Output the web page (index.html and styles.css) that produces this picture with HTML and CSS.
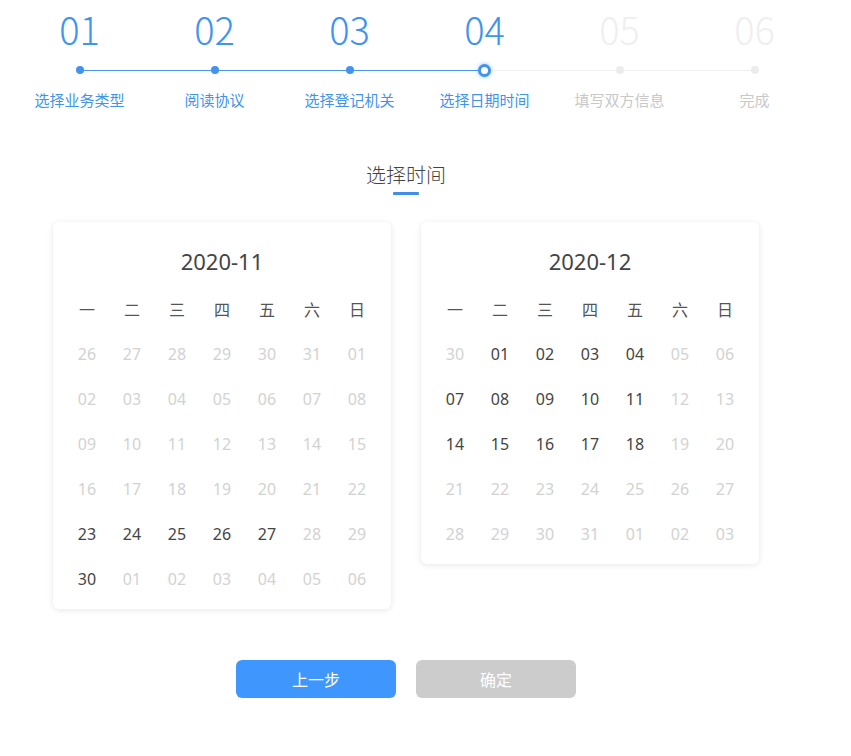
FILE: index.html
```html
<!DOCTYPE html>
<html lang="zh-CN">
<head>
<meta charset="utf-8">
<title>选择日期时间</title>
<link rel="stylesheet" href="styles.css">
</head>
<body>
<div class="page">
  <div class="steps">
    <div class="step done first">
      <div class="step-num">01</div>
      <div class="step-track"><span class="line-l"></span><span class="dot"></span><span class="line-r on"></span></div>
      <div class="step-label">选择业务类型</div>
    </div>
    <div class="step done">
      <div class="step-num">02</div>
      <div class="step-track"><span class="line-l on"></span><span class="dot"></span><span class="line-r on"></span></div>
      <div class="step-label">阅读协议</div>
    </div>
    <div class="step done">
      <div class="step-num">03</div>
      <div class="step-track"><span class="line-l on"></span><span class="dot"></span><span class="line-r on"></span></div>
      <div class="step-label">选择登记机关</div>
    </div>
    <div class="step done current">
      <div class="step-num">04</div>
      <div class="step-track"><span class="line-l on"></span><span class="dot ring"></span><span class="line-r"></span></div>
      <div class="step-label">选择日期时间</div>
    </div>
    <div class="step todo">
      <div class="step-num">05</div>
      <div class="step-track"><span class="line-l"></span><span class="dot"></span><span class="line-r"></span></div>
      <div class="step-label">填写双方信息</div>
    </div>
    <div class="step todo last">
      <div class="step-num">06</div>
      <div class="step-track"><span class="line-l"></span><span class="dot"></span><span class="line-r"></span></div>
      <div class="step-label">完成</div>
    </div>
  </div>

  <div class="section-title">
    <h2>选择时间</h2>
    <span class="bar"></span>
  </div>

  <div class="calendars">
    <div class="cal">
      <div class="cal-title">2020-11</div>
      <div class="cal-grid">
        <span class="wk">一</span><span class="wk">二</span><span class="wk">三</span><span class="wk">四</span><span class="wk">五</span><span class="wk">六</span><span class="wk">日</span>
        <span class="off">26</span><span class="off">27</span><span class="off">28</span><span class="off">29</span><span class="off">30</span><span class="off">31</span><span class="off">01</span>
        <span class="off">02</span><span class="off">03</span><span class="off">04</span><span class="off">05</span><span class="off">06</span><span class="off">07</span><span class="off">08</span>
        <span class="off">09</span><span class="off">10</span><span class="off">11</span><span class="off">12</span><span class="off">13</span><span class="off">14</span><span class="off">15</span>
        <span class="off">16</span><span class="off">17</span><span class="off">18</span><span class="off">19</span><span class="off">20</span><span class="off">21</span><span class="off">22</span>
        <span class="on">23</span><span class="on">24</span><span class="on">25</span><span class="on">26</span><span class="on">27</span><span class="off">28</span><span class="off">29</span>
        <span class="on">30</span><span class="off">01</span><span class="off">02</span><span class="off">03</span><span class="off">04</span><span class="off">05</span><span class="off">06</span>
      </div>
    </div>
    <div class="cal">
      <div class="cal-title">2020-12</div>
      <div class="cal-grid">
        <span class="wk">一</span><span class="wk">二</span><span class="wk">三</span><span class="wk">四</span><span class="wk">五</span><span class="wk">六</span><span class="wk">日</span>
        <span class="off">30</span><span class="on">01</span><span class="on">02</span><span class="on">03</span><span class="on">04</span><span class="off">05</span><span class="off">06</span>
        <span class="on">07</span><span class="on">08</span><span class="on">09</span><span class="on">10</span><span class="on">11</span><span class="off">12</span><span class="off">13</span>
        <span class="on">14</span><span class="on">15</span><span class="on">16</span><span class="on">17</span><span class="on">18</span><span class="off">19</span><span class="off">20</span>
        <span class="off">21</span><span class="off">22</span><span class="off">23</span><span class="off">24</span><span class="off">25</span><span class="off">26</span><span class="off">27</span>
        <span class="off">28</span><span class="off">29</span><span class="off">30</span><span class="off">31</span><span class="off">01</span><span class="off">02</span><span class="off">03</span>
      </div>
    </div>
  </div>

  <div class="actions">
    <button class="btn btn-prev">上一步</button>
    <button class="btn btn-ok">确定</button>
  </div>
</div>
</body>
</html>
```

FILE: styles.css
```css
* { box-sizing: border-box; }
html, body { margin: 0; padding: 0; background: #fff; }
body {
  font-family: "Noto Sans CJK SC", "Noto Sans", sans-serif;
  color: #333;
}
.page { width: 851px; }

/* stepper */
.steps {
  display: flex;
  padding-left: 12px;
  padding-top: 7px;
}
.step {
  width: 135px;
  display: flex;
  flex-direction: column;
  align-items: center;
}
.step-num {
  font-family: "Noto Sans CJK SC", sans-serif;
  font-weight: 300;
  font-size: 38px;
  line-height: 44px;
  height: 44px;
  color: #4193ee;
}
.step.todo .step-num { color: #efefef; }
.step-track {
  margin-top: 11px;
  width: 100%;
  height: 16px;
  display: flex;
  align-items: center;
}
.line-l, .line-r {
  flex: 1;
  height: 1px;
  background: #efefef;
}
.line-l.on, .line-r.on { background: #4a96ee; }
.step.first .line-l, .step.last .line-r { background: transparent; }
.dot {
  width: 8px;
  height: 8px;
  border-radius: 50%;
  background: #4193ee;
  flex: none;
}
.step.todo .dot { background: #ececec; }
.dot.ring {
  width: 13px;
  height: 13px;
  background: #fff;
  border: 3px solid #4193ee;
  box-shadow: 0 0 4px rgba(65, 147, 238, 0.6);
}
.step-label {
  margin-top: 12px;
  font-size: 15px;
  line-height: 20px;
  color: #4193ee;
}
.step.todo .step-label { color: #c8c8c8; }

/* section title */
.section-title {
  margin-top: 51px;
  width: 812px;
  display: flex;
  flex-direction: column;
  align-items: center;
}
.section-title h2 {
  margin: 0;
  font-size: 20px;
  font-weight: 300;
  line-height: 28px;
  color: #444;
}
.section-title .bar {
  margin-top: 3px;
  width: 26px;
  height: 3px;
  background: #3f8fe9;
  border-radius: 1px;
}

/* calendars */
.calendars {
  margin-top: 27px;
  padding-left: 53px;
  display: flex;
  align-items: flex-start;
  gap: 30px;
}
.cal {
  width: 338px;
  background: #fff;
  border-radius: 6px;
  box-shadow: 0 1px 6px rgba(0, 0, 0, 0.1);
  padding: 24px 11px 8px;
}
.cal-title {
  text-align: center;
  font-family: "Noto Sans", "Noto Sans CJK SC", sans-serif;
  font-size: 22px;
  line-height: 30px;
  color: #444;
}
.cal-grid {
  margin-top: 10px;
  display: grid;
  grid-template-columns: repeat(7, 45px);
  grid-auto-rows: 45px;
  justify-content: center;
}
.cal-grid span {
  display: flex;
  align-items: center;
  justify-content: center;
  font-family: "Noto Sans", "Noto Sans CJK SC", sans-serif;
  font-size: 16px;
}
.cal-grid .wk { color: #555; font-family: "Noto Sans CJK SC", sans-serif; font-size: 16px; }
.cal-grid .on { color: #444; }
.cal-grid .off { color: #d2d2d2; }

/* buttons */
.actions {
  margin-top: 51px;
  padding-left: 236px;
  display: flex;
  gap: 20px;
}
.btn {
  width: 160px;
  height: 38px;
  border: none;
  border-radius: 6px;
  font-family: "Noto Sans CJK SC", sans-serif;
  font-size: 16px;
  color: #fff;
  padding: 0;
}
.btn-prev { background: #3f97fd; }
.btn-ok { background: #cccccc; }
```
